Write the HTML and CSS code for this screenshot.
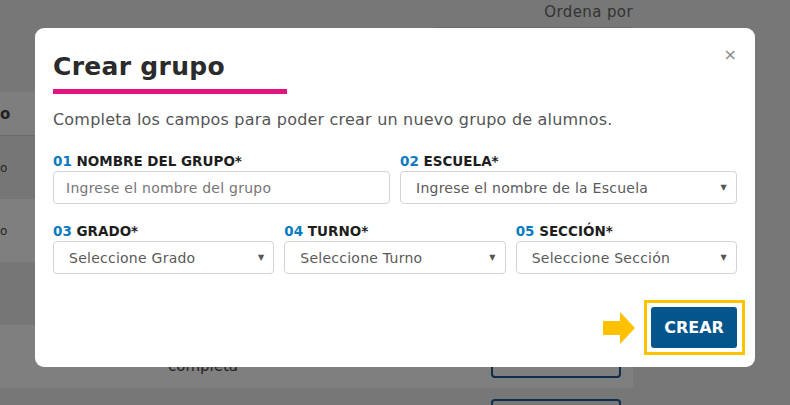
FILE: index.html
```html
<!DOCTYPE html>
<html lang="es">
<head>
<meta charset="utf-8">
<title>Crear grupo</title>
<link rel="stylesheet" href="styles.css">
</head>
<body>
<div class="page">
  <div class="sort">
    <span class="sort-label">Ordena por</span>
    <div class="sort-box"></div>
  </div>
  <div class="table">
    <div class="row row-head"><span class="cell-frag bold">o</span></div>
    <div class="row row-a"><span class="cell-frag">o</span></div>
    <div class="row row-b"><span class="cell-frag">o</span></div>
    <div class="row row-a"></div>
    <div class="row row-b"><span class="row-text">completa</span><span class="row-btn"></span></div>
    <div class="row row-c"><span class="row-text"></span><span class="row-btn"></span></div>
  </div>
</div>

<div class="overlay">
  <div class="modal">
    <button class="close" aria-label="Cerrar">×</button>
    <h1 class="title">Crear grupo</h1>
    <div class="title-bar"></div>
    <p class="intro">Completa los campos para poder crear un nuevo grupo de alumnos.</p>

    <div class="grid grid-2">
      <div class="field">
        <label class="label"><span class="num">01</span> NOMBRE DEL GRUPO*</label>
        <div class="input">Ingrese el nombre del grupo</div>
      </div>
      <div class="field">
        <label class="label"><span class="num">02</span> ESCUELA*</label>
        <div class="select"><span>Ingrese el nombre de la Escuela</span><span class="caret">▼</span></div>
      </div>
    </div>

    <div class="grid grid-3">
      <div class="field">
        <label class="label"><span class="num">03</span> GRADO*</label>
        <div class="select"><span>Seleccione Grado</span><span class="caret">▼</span></div>
      </div>
      <div class="field">
        <label class="label"><span class="num">04</span> TURNO*</label>
        <div class="select"><span>Seleccione Turno</span><span class="caret">▼</span></div>
      </div>
      <div class="field">
        <label class="label"><span class="num">05</span> SECCIÓN*</label>
        <div class="select"><span>Seleccione Sección</span><span class="caret">▼</span></div>
      </div>
    </div>

    <div class="actions">
      <svg class="arrow" width="32" height="32" viewBox="0 0 32 32" aria-hidden="true">
        <polygon points="0,9 17,9 17,0 32,16 17,32 17,23 0,23" fill="#fcc200"/>
      </svg>
      <span class="highlight"><button class="btn">CREAR</button></span>
    </div>
  </div>
</div>
</body>
</html>
```

FILE: styles.css
```css
* { box-sizing: border-box; }

html, body {
  margin: 0;
  padding: 0;
  width: 790px;
  height: 405px;
  overflow: hidden;
}

body {
  background: #777777;
  font-family: "DejaVu Sans", "Noto Sans", sans-serif;
  position: relative;
}

/* background page (already dimmed by overlay) */
.page {
  width: 790px;
  height: 405px;
  overflow: hidden;
}

.sort {
  display: flex;
  flex-direction: column;
  align-items: flex-end;
  width: 633px;
  padding-top: 2px;
}

.sort-label {
  font-size: 15px;
  color: #333;
  padding-right: 0;
  line-height: 20px;
  letter-spacing: 0.4px;
}

.sort-box {
  width: 198px;
  height: 20px;
  margin-top: 5px;
  border-top: 1px solid #6a6a6a;
}

.table {
  width: 633px;
  margin-top: 45px;
}

.row {
  display: flex;
  align-items: center;
  height: 63px;
}

.row-head {
  height: 44px;
  background: #7e7e7e;
  border-bottom: 1px solid #6b6b6b;
}

.row-a { background: #767676; }
.row-b { background: #7f7f7f; }
.row-c {
  background: #777777;
  height: 17px;
  align-items: flex-start;
  overflow: hidden;
}

.cell-frag {
  font-size: 12px;
  color: #222;
  margin-left: 0;
}

.cell-frag.bold {
  font-weight: bold;
  font-size: 15px;
}

.row-text {
  font-size: 15px;
  color: #222;
  width: 491px;
  padding-left: 168px;
  margin-top: 18px;
}

.row-btn {
  width: 130px;
  height: 30px;
  border: 2px solid #0e2e4c;
  border-radius: 4px;
  margin-top: 12px;
  flex: none;
}

.row-c .row-btn { margin-top: 11px; }
.row-c .row-text { margin-top: 0; }

/* overlay + modal */
.overlay {
  position: fixed;
  inset: 0;
  padding: 28px 35px;
}

.modal {
  position: relative;
  width: 720px;
  background: #fff;
  border-radius: 9px;
  padding: 20px 18px 12px;
}

.close {
  position: absolute;
  top: 17px;
  right: 18px;
  border: 0;
  background: none;
  padding: 0;
  font-family: "DejaVu Sans", sans-serif;
  font-size: 16px;
  color: #888;
  line-height: 20px;
}

.title {
  margin: 0;
  font-size: 25px;
  font-weight: bold;
  color: #2b2b2b;
  line-height: 38px;
  letter-spacing: 0.3px;
}

.title-bar {
  width: 234px;
  height: 5px;
  background: #e3137f;
  margin-top: 3px;
}

.intro {
  margin: 14px 0 0;
  font-size: 16px;
  color: #555;
  line-height: 24px;
  letter-spacing: 0.2px;
}

.grid {
  display: grid;
  column-gap: 10px;
}

.grid-2 {
  grid-template-columns: 1fr 1fr;
  margin-top: 20px;
}

.grid-3 {
  grid-template-columns: 1fr 1fr 1fr;
  margin-top: 18px;
}

.label {
  display: block;
  font-size: 13.5px;
  font-weight: bold;
  color: #1e1e1e;
  line-height: 18px;
  margin-bottom: 1px;
}

.num { color: #0b7bbf; }

.input, .select {
  height: 33px;
  border: 1px solid #d4d4d4;
  border-radius: 4px;
  display: flex;
  align-items: center;
  font-size: 14px;
  color: #767676;
  letter-spacing: 0.25px;
}

.input { padding: 0 12px; }

.select {
  padding: 0 9px 0 15px;
  justify-content: space-between;
  color: #5a5a5a;
}

.caret {
  font-size: 8px;
  color: #555;
}

.actions {
  display: flex;
  justify-content: flex-end;
  align-items: center;
  margin-top: 26px;
  margin-right: -8px;
}

.arrow {
  margin-right: 9px;
}

.highlight {
  display: flex;
  border: 3px solid #fcc400;
  padding: 4px 5px 4px 4px;
}

.btn {
  width: 86px;
  height: 41px;
  border: 0;
  border-radius: 3px;
  background: #03558c;
  color: #fff;
  font-family: "DejaVu Sans", sans-serif;
  font-weight: bold;
  font-size: 16px;
}
```
